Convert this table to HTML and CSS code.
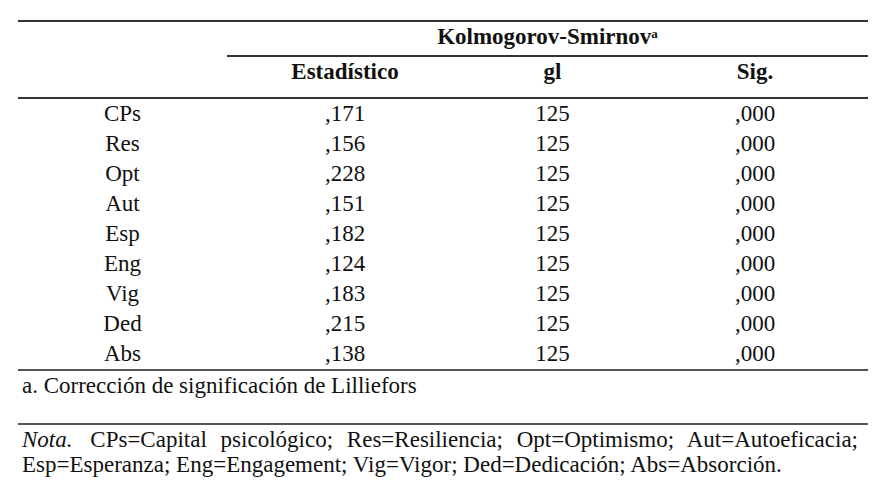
FILE: index.html
```html
<!DOCTYPE html>
<html lang="es">
<head>
<meta charset="utf-8">
<title>Pruebas de normalidad</title>
<link rel="stylesheet" href="styles.css">
</head>
<body>
<div class="page">
  <div class="ks">
    <div class="head1">
      <div class="cell"></div>
      <div class="cell bold span">Kolmogorov-Smirnov<span class="sup">a</span></div>
    </div>
    <div class="grid head2">
      <div class="cell"></div>
      <div class="cell bold">Estadístico</div>
      <div class="cell bold">gl</div>
      <div class="cell bold">Sig.</div>
    </div>
    <div class="grid row"><div class="cell">CPs</div><div class="cell">,171</div><div class="cell">125</div><div class="cell">,000</div></div>
    <div class="grid row"><div class="cell">Res</div><div class="cell">,156</div><div class="cell">125</div><div class="cell">,000</div></div>
    <div class="grid row"><div class="cell">Opt</div><div class="cell">,228</div><div class="cell">125</div><div class="cell">,000</div></div>
    <div class="grid row"><div class="cell">Aut</div><div class="cell">,151</div><div class="cell">125</div><div class="cell">,000</div></div>
    <div class="grid row"><div class="cell">Esp</div><div class="cell">,182</div><div class="cell">125</div><div class="cell">,000</div></div>
    <div class="grid row"><div class="cell">Eng</div><div class="cell">,124</div><div class="cell">125</div><div class="cell">,000</div></div>
    <div class="grid row"><div class="cell">Vig</div><div class="cell">,183</div><div class="cell">125</div><div class="cell">,000</div></div>
    <div class="grid row"><div class="cell">Ded</div><div class="cell">,215</div><div class="cell">125</div><div class="cell">,000</div></div>
    <div class="grid row"><div class="cell">Abs</div><div class="cell">,138</div><div class="cell">125</div><div class="cell">,000</div></div>
  </div>
  <div class="footnote">a. Corrección de significación de Lilliefors</div>
  <p class="nota"><i class="nota-label">Nota.</i> CPs=Capital psicológico; Res=Resiliencia; Opt=Optimismo; Aut=Autoeficacia; Esp=Esperanza; Eng=Engagement; Vig=Vigor; Ded=Dedicación; Abs=Absorción.</p>
</div>
</body>
</html>
```
FILE: styles.css
```css
* {
  font-family: "Tinos", "Liberation Serif", "Times New Roman", serif;
}

body {
  margin: 0;
  font-size: 23px;
}

.page {
  width: 850px;
  padding: 20px 0 0 18px;
  color: #111111;
}

.ks {
  border-top: 2px solid #333333;
  border-bottom: 2px solid #555555;
}

.head1 {
  display: grid;
  grid-template-columns: 209px 641px;
}

.grid {
  display: grid;
  grid-template-columns: 209px 236px 179px 226px;
}

.cell {
  line-height: 30px;
  text-align: center;
  white-space: nowrap;
}

.bold {
  font-weight: bold;
}

.head1 .cell {
  padding-bottom: 3px;
}

.head1 .span {
  border-bottom: 2px solid #333333;
}

.head2 {
  padding-bottom: 10px;
  border-bottom: 2px solid #333333;
}

.sup {
  font-size: 13px;
  vertical-align: 6px;
  line-height: 0;
}

.footnote {
  line-height: 30px;
  padding: 0 0 22px 4px;
  border-bottom: 2px solid #555555;
}

.nota {
  margin: 0;
  padding: 2px 10px 0 4px;
  line-height: 25px;
  text-align: justify;
}

.nota-label {
  font-style: italic;
  margin-right: 4px;
}
```
